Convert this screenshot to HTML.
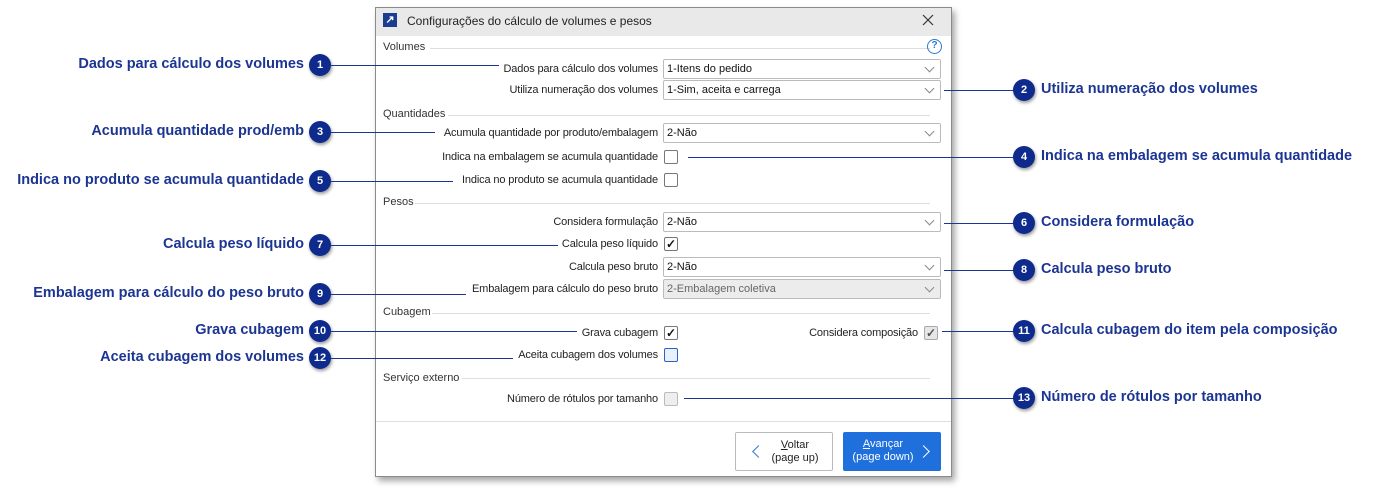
<!DOCTYPE html>
<html><head><meta charset="utf-8"><style>
*{margin:0;padding:0;box-sizing:border-box}
body{width:1374px;height:493px;background:#fff;position:relative;overflow:hidden;font-family:"Liberation Sans",sans-serif}
.a{position:absolute}
.dlg{left:375px;top:7px;width:577px;height:470px;border:1px solid #8a8a8a;background:#fff;box-shadow:3px 4px 6px rgba(0,0,0,.35)}
.tb{left:376px;top:8px;width:575px;height:28px;background:#e9e9e9}
.lbl{font-size:11px;letter-spacing:-0.15px;color:#222;text-align:right;width:300px;white-space:nowrap}
.sec{font-size:11px;color:#333}
.hr{height:1px;background:#dedede}
.cb{width:278px;height:20px;border:1px solid #bbb;background:#fff;font-size:11px;color:#111;padding:3px 3px;border-radius:2px}
.cb.dis{background:#ececec;color:#666}
.cb:after{content:"";position:absolute;right:7px;top:4px;width:6px;height:6px;border-right:1px solid #888;border-bottom:1px solid #888;transform:rotate(45deg)}
.ck{width:14px;height:14px;border:1px solid #777;border-radius:2px;background:#fff;font-size:12px;line-height:12px;text-align:center;color:#111;font-weight:bold}
.ct{font-size:14.5px;font-weight:bold;color:#1c3593;white-space:nowrap}
.bd{width:22px;height:22px;border-radius:50%;background:#0d2a8c;color:#fff;font-size:11px;font-weight:bold;text-align:center;line-height:22px;box-shadow:1px 2px 3px rgba(0,0,0,.4)}
.ln{height:1px;background:#1c3593}
</style></head><body>
<div class="a dlg"></div>
<div class="a tb"></div>
<div class="a" style="left:383px;top:13px;width:14px;height:14px;background:#1a3d8f;color:#fff;font-size:11px;line-height:14px;text-align:center;font-weight:bold">↗</div>
<div class="a" style="left:407px;top:14px;font-size:12px;color:#222">Configurações do cálculo de volumes e pesos</div>
<svg class="a" style="left:922px;top:14px" width="12" height="12"><path d="M1 1L11 11M11 1L1 11" stroke="#333" stroke-width="1.2"/></svg>

<div class="a sec" style="left:383px;top:41px">Volumes</div><div class="a hr" style="left:430px;top:48px;width:500px"></div>
<div class="a" style="left:927px;top:39px;width:15px;height:15px;border:1.5px solid #2d7ad6;border-radius:50%;color:#2d7ad6;font-size:10px;text-align:center;line-height:12px;font-weight:bold">?</div>
<div class="a lbl" style="left:358px;top:63px">Dados para cálculo dos volumes</div>
<div class="a cb" style="left:663px;top:59px">1-Itens do pedido</div>
<div class="a lbl" style="left:358px;top:84px">Utiliza numeração dos volumes</div>
<div class="a cb" style="left:663px;top:80px">1-Sim, aceita e carrega</div>

<div class="a sec" style="left:383px;top:108px">Quantidades</div><div class="a hr" style="left:448px;top:115px;width:482px"></div>
<div class="a lbl" style="left:358px;top:127px">Acumula quantidade por produto/embalagem</div>
<div class="a cb" style="left:663px;top:123px">2-Não</div>
<div class="a lbl" style="left:358px;top:151px">Indica na embalagem se acumula quantidade</div>
<div class="a ck" style="left:664px;top:150px"></div>
<div class="a lbl" style="left:358px;top:174px">Indica no produto se acumula quantidade</div>
<div class="a ck" style="left:664px;top:173px"></div>

<div class="a sec" style="left:383px;top:196px">Pesos</div><div class="a hr" style="left:415px;top:203px;width:515px"></div>
<div class="a lbl" style="left:358px;top:216px">Considera formulação</div>
<div class="a cb" style="left:663px;top:212px">2-Não</div>
<div class="a lbl" style="left:358px;top:238px">Calcula peso líquido</div>
<div class="a ck" style="left:664px;top:237px">✓</div>
<div class="a lbl" style="left:358px;top:261px">Calcula peso bruto</div>
<div class="a cb" style="left:663px;top:257px">2-Não</div>
<div class="a lbl" style="left:358px;top:283px">Embalagem para cálculo do peso bruto</div>
<div class="a cb dis" style="left:663px;top:279px">2-Embalagem coletiva</div>

<div class="a sec" style="left:383px;top:306px">Cubagem</div><div class="a hr" style="left:432px;top:313px;width:498px"></div>
<div class="a lbl" style="left:358px;top:327px">Grava cubagem</div>
<div class="a ck" style="left:664px;top:326px">✓</div>
<div class="a lbl" style="left:618px;top:327px">Considera composição</div>
<div class="a ck" style="left:924px;top:326px;background:#e6e6e6;border-color:#aaa;color:#555">✓</div>
<div class="a lbl" style="left:358px;top:349px">Aceita cubagem dos volumes</div>
<div class="a ck" style="left:664px;top:348px;border-color:#2b62c7;background:#eaf0fb"></div>

<div class="a sec" style="left:383px;top:372px">Serviço externo</div><div class="a hr" style="left:462px;top:378px;width:468px"></div>
<div class="a lbl" style="left:358px;top:393px">Número de rótulos por tamanho</div>
<div class="a ck" style="left:664px;top:392px;background:#eee;border-color:#bbb"></div>

<div class="a hr" style="left:376px;top:421px;width:575px"></div>
<div class="a" style="left:735px;top:432px;width:98px;height:39px;border:1px solid #bbb;border-radius:2px;background:#fff;font-size:11px;color:#222;text-align:center;padding-top:6px;padding-left:22px;line-height:13px"><u>V</u>oltar<br>(page up)</div>
<div class="a" style="left:754px;top:447px;width:9px;height:9px;border-left:1px solid #2d7ad6;border-bottom:1px solid #2d7ad6;transform:rotate(45deg)"></div>
<div class="a" style="left:843px;top:432px;width:98px;height:39px;border-radius:2px;background:#1f6fdc;font-size:11px;color:#fff;text-align:center;padding-top:6px;padding-right:18px;line-height:13px"><u>A</u>vançar<br>(page down)</div>
<div class="a" style="left:919px;top:447px;width:9px;height:9px;border-right:1px solid #fff;border-top:1px solid #fff;transform:rotate(45deg)"></div>

<!-- left callouts -->
<div class="a ct" style="right:1070px;top:56px">Dados para cálculo dos volumes</div><div class="a bd" style="left:309px;top:54px">1</div><div class="a ln" style="left:331px;top:65px;width:168px"></div>
<div class="a ct" style="right:1070px;top:123px">Acumula quantidade prod/emb</div><div class="a bd" style="left:309px;top:121px">3</div><div class="a ln" style="left:331px;top:132px;width:104px"></div>
<div class="a ct" style="right:1070px;top:172px">Indica no produto se acumula quantidade</div><div class="a bd" style="left:309px;top:170px">5</div><div class="a ln" style="left:331px;top:181px;width:122px"></div>
<div class="a ct" style="right:1070px;top:236px">Calcula peso líquido</div><div class="a bd" style="left:309px;top:234px">7</div><div class="a ln" style="left:331px;top:245px;width:227px"></div>
<div class="a ct" style="right:1070px;top:285px">Embalagem para cálculo do peso bruto</div><div class="a bd" style="left:309px;top:283px">9</div><div class="a ln" style="left:331px;top:294px;width:135px"></div>
<div class="a ct" style="right:1070px;top:322px">Grava cubagem</div><div class="a bd" style="left:309px;top:320px">10</div><div class="a ln" style="left:331px;top:331px;width:246px"></div>
<div class="a ct" style="right:1070px;top:349px">Aceita cubagem dos volumes</div><div class="a bd" style="left:309px;top:347px">12</div><div class="a ln" style="left:331px;top:358px;width:182px"></div>

<!-- right callouts -->
<div class="a ln" style="left:944px;top:90px;width:70px"></div><div class="a bd" style="left:1013px;top:79px">2</div><div class="a ct" style="left:1041px;top:81px">Utiliza numeração dos volumes</div>
<div class="a ln" style="left:688px;top:157px;width:326px"></div><div class="a bd" style="left:1013px;top:146px">4</div><div class="a ct" style="left:1041px;top:148px">Indica na embalagem se acumula quantidade</div>
<div class="a ln" style="left:944px;top:223px;width:70px"></div><div class="a bd" style="left:1013px;top:212px">6</div><div class="a ct" style="left:1041px;top:214px">Considera formulação</div>
<div class="a ln" style="left:944px;top:270px;width:70px"></div><div class="a bd" style="left:1013px;top:259px">8</div><div class="a ct" style="left:1041px;top:261px">Calcula peso bruto</div>
<div class="a ln" style="left:942px;top:331px;width:72px"></div><div class="a bd" style="left:1013px;top:320px">11</div><div class="a ct" style="left:1041px;top:322px">Calcula cubagem do item pela composição</div>
<div class="a ln" style="left:684px;top:398px;width:330px"></div><div class="a bd" style="left:1013px;top:387px">13</div><div class="a ct" style="left:1041px;top:389px">Número de rótulos por tamanho</div>
</body></html>
